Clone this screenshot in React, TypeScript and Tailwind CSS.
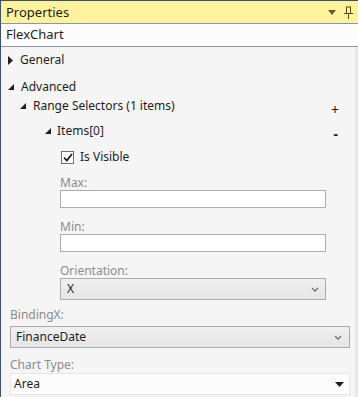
import React from 'react';

const font = { fontFamily: '"Noto Sans", "Open Sans", sans-serif' };

function Expanded() {
  return (
    <svg width="6" height="6" viewBox="0 0 6 6" className="shrink-0">
      <path d="M6 0 L6 6 L0 6 Z" fill="#1e1e1e" />
    </svg>
  );
}

function Collapsed() {
  return (
    <svg width="5" height="9" viewBox="0 0 5 9" className="shrink-0">
      <path d="M0 0 L5 4.5 L0 9 Z" fill="#1e1e1e" />
    </svg>
  );
}

function Chevron() {
  return (
    <svg width="8" height="5" viewBox="0 0 8 5">
      <path d="M1 1 L4 4 L7 1" stroke="#707070" strokeWidth="1.3" fill="none" />
    </svg>
  );
}

function Label({ children }: { children: React.ReactNode }) {
  return <div className="h-[14px] text-[12px] leading-[14px] text-[#8c8c8c]">{children}</div>;
}

export default function App() {
  return (
    <div
      className="w-[358px] h-[397px] flex flex-col bg-[#f5f5f5] border-l border-[#3f4f6b] border-t border-t-[#3f4f6b] text-[12px] text-[#1e1e1e] overflow-hidden"
      style={font}
    >
      {/* Title bar */}
      <div className="h-[23px] shrink-0 bg-[#fff29d] border-b border-[#8e96a8] flex items-center justify-between pl-[5px] pr-[5px]">
        <span className="text-[13px] text-[#1e1e1e] mt-[1px]">Properties</span>
        <div className="flex items-center gap-[8px]">
          <svg width="8" height="5" viewBox="0 0 8 5">
            <path d="M0 0 H8 L4 5 Z" fill="#6b5a2c" />
          </svg>
          <svg width="9" height="13" viewBox="0 0 9 13">
            <path d="M2 1 H7 M2.5 1 V7 M6.5 1 V7 M0 7.5 H9 M4.5 8 V13" stroke="#5b4a1c" strokeWidth="1" fill="none" />
          </svg>
        </div>
      </div>

      {/* Object name */}
      <div className="h-[23px] shrink-0 bg-[#fcfcfc] border-b border-[#8e96a8] flex items-center pl-[5px] text-[13px]">
        FlexChart
      </div>

      <div className="flex flex-1 min-h-0">
        <div className="flex-1 pt-[3px]">
          <div className="h-[20px] flex items-center gap-[7px] pl-[7px]">
            <Collapsed />
            <span>General</span>
          </div>
          <div className="mt-[9px] h-[16px] flex items-center gap-[7px] pl-[7px]">
            <Expanded />
            <span>Advanced</span>
          </div>
          <div className="h-[22px] flex items-center pl-[19px] pr-[16px]">
            <Expanded />
            <span className="ml-[7px] flex-1">Range Selectors (1 items)</span>
            <span className="text-[14px] mt-[7px]">+</span>
          </div>
          <div className="h-[28px] flex items-center pl-[44px] pr-[17px]">
            <Expanded />
            <span className="ml-[6px] flex-1">Items[0]</span>
            <span className="text-[14px] font-bold mt-[5px]">-</span>
          </div>
          <div className="mt-[1px] h-[22px] flex items-center pl-[60px] gap-[6px]">
            <div className="w-[13px] h-[13px] border border-[#707070] bg-white flex items-center justify-center">
              <svg width="10" height="9" viewBox="0 0 10 9">
                <path d="M1 4.5 L3.8 7.5 L9 1" stroke="#1e1e1e" strokeWidth="1.8" fill="none" />
              </svg>
            </div>
            <span>Is Visible</span>
          </div>

          <div className="pl-[59px] pr-[29px]">
            <div className="mt-[8px]">
              <Label>Max:</Label>
            </div>
            <div className="h-[18px] bg-white border border-[#acacac]" />
            <div className="mt-[12px]">
              <Label>Min:</Label>
            </div>
            <div className="h-[18px] bg-white border border-[#acacac]" />
            <div className="mt-[12px]">
              <Label>Orientation:</Label>
            </div>
            <div className="h-[22px] border border-[#acacac] bg-gradient-to-b from-[#f0f0f0] to-[#e5e5e5] flex items-center justify-between pl-[6px] pr-[6px]">
              <span>X</span>
              <Chevron />
            </div>
          </div>

          <div className="pl-[9px] pr-[5px]">
            <div className="mt-[8px]">
              <Label>BindingX:</Label>
            </div>
            <div className="mt-[4px] h-[22px] border border-[#acacac] bg-gradient-to-b from-[#f0f0f0] to-[#e5e5e5] flex items-center justify-between pl-[5px] pr-[7px]">
              <span>FinanceDate</span>
              <Chevron />
            </div>
            <div className="mt-[10px]">
              <Label>Chart Type:</Label>
            </div>
            <div className="mt-[1px] h-[22px] border border-[#e6e6e6] bg-[#fcfcfc] flex items-center justify-between pl-[3px] pr-[5px]">
              <span>Area</span>
              <svg width="9" height="5" viewBox="0 0 9 5">
                <path d="M0 0 H9 L4.5 5 Z" fill="#1e1e1e" />
              </svg>
            </div>
          </div>
        </div>
        <div className="w-[3px] bg-[#e8e8ec]" />
      </div>
    </div>
  );
}
